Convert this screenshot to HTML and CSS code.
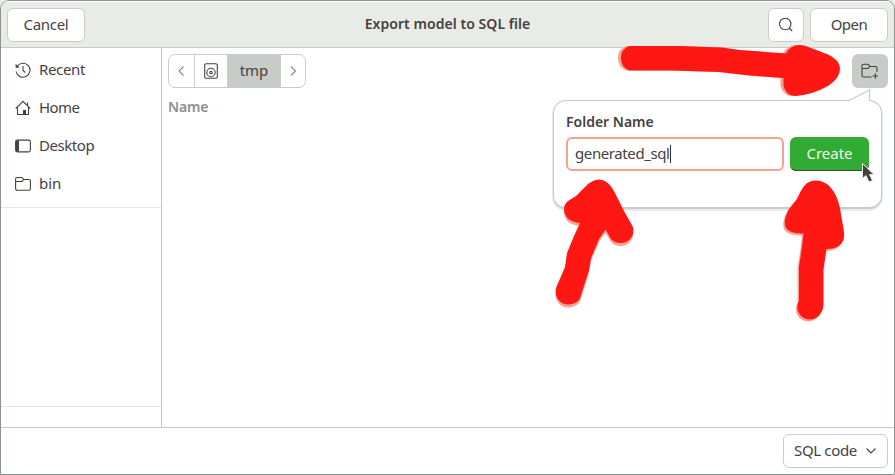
FILE: index.html
```html
<!DOCTYPE html>
<html lang="en">
<head>
<meta charset="utf-8">
<title>Export model to SQL file</title>
<link rel="stylesheet" href="styles.css">
</head>
<body>
<div class="window">
  <header class="header">
    <button class="btn cancel"><span class="t-cancel">Cancel</span></button>
    <h1 class="title">Export model to SQL file</h1>
    <div class="actions">
      <button class="btn search"><svg width="16" height="16" viewBox="0 0 16 16"><circle cx="7.2" cy="7" r="5.7"/><path d="M11.2 11l3 3"/></svg></button>
      <button class="btn open"><span class="t-open">Open</span></button>
    </div>
  </header>
  <main class="main">
    <nav class="sidebar">
      <ul class="places">
        <li><svg width="16" height="16" viewBox="0 0 16 16"><path d="M2.2 4.3A7 7 0 1 1 1.1 9.5M8 4v4.5l2.3 2"/><path class="solid" d="M.6 1.800v4h4z"/></svg><span class="t-recent">Recent</span></li>
        <li><svg width="16" height="16" viewBox="0 0 16 16"><path d="M.7 8.6L8 1.3l7.3 7.3M2.5 7.3v7.2h11V7.3M12.5 5.5V2.5"/><path class="solid" d="M8 10h3v4.5H8z"/></svg><span class="t-home">Home</span></li>
        <li><svg width="16" height="16" viewBox="0 0 16 16"><rect x=".6" y="2.1" width="14.8" height="11.8" rx="1.8"/><path class="solid" d="M1 2.500h3v11H1z"/></svg><span class="t-desktop">Desktop</span></li>
        <li><svg width="16" height="16" viewBox="0 0 16 16"><path d="M.6 5.500V3Q.6 1.500 2.100 1.500h4.300q1 0 1.600 1l.5 1h5.400q1.500 0 1.500 1.500v7.500q0 1.800-1.800 1.800H2.400Q.6 14.300 .6 12.500V6q0-.5 1-.5h4.800q1 0 1.500-1l.6-1"/></svg><span class="t-bin">bin</span></li>
      </ul>
      <div class="other"></div>
    </nav>
    <section class="content">
      <div class="toolbar">
        <div class="path">
          <span class="seg arrow"><svg width="10" height="12" viewBox="0 0 10 12"><path d="M6.500 1.500L2 6l4.500 4.500"/></svg></span>
          <span class="seg disk"><svg width="14" height="16" viewBox="0 0 14 16"><rect x=".7" y=".7" width="12.6" height="14.6" rx="1.5"/><circle cx="7" cy="9.5" r="4.2"/><circle cx="7" cy="9.5" r="1.3"/></svg></span>
          <span class="seg current"><span class="t-tmp">tmp</span></span>
          <span class="seg arrow last"><svg width="10" height="12" viewBox="0 0 10 12"><path d="M3 1.500L7.500 6 3 10.500"/></svg></span>
        </div>
        <button class="new-folder"><svg width="18" height="16" viewBox="0 0 18 16"><path d="M10.5 14H2.5Q1 14 1 12.5V2.8Q1 1.300 2.500 1.300h4q1 0 1.500 1l.5 1.200h6Q16 3.500 16 5v4M1 5.500h5.500q1 0 1.500-1l.5-1M11.500 13H17M14.300 10.200v5.600"/></svg></button>
      </div>
      <div class="column-head"><span class="t-name">Name</span></div>
    </section>
  </main>
  <footer class="footer">
    <button class="btn filter"><span class="t-sql">SQL code</span><svg width="12" height="8" viewBox="0 0 12 8"><path d="M1.500 1.500L6 6l4.500-4.500"/></svg></button>
  </footer>

  <div class="popover">
    <svg class="pointer" width="24" height="13" viewBox="0 0 24 13"><path d="M1 12L22.500 1v11"/></svg>
    <div class="label"><span class="t-folder">Folder Name</span></div>
    <div class="row">
      <div class="entry"><span class="t-entry">generated_sql</span><i class="caret"></i></div>
      <button class="create"><span class="t-create">Create</span></button>
    </div>
  </div>

  <svg class="overlay" width="895" height="475" viewBox="0 0 895 475">
    <defs>
      <path id="a1" d="M629 46H680L722 47.500 740 50 786 53.500Q790 45 800 45 804 45 811 48L828 54.500Q840 60 840 69 840 78 828 86 813 94.500 796 96 786 96 783.500 86L783.500 78 750 75.500 720 72 672 70.500H629Q621 67 621 58 621 49 629 46Z"/>
      <path id="a2" d="M599 179.500Q592 179.500 585 187L576 196 568 201Q562 206 565 214 568 222 580 223L574 236 567 253 565 267 556 288C554 297 560 304.500 568 304.500 575 304.500 580 301 581 295L589 270 591 258 599 239 605.500 229.500 611 239Q617 245 626 242 635 237 633 227L624 211 615 193Q609 180 599 179.500Z"/>
      <path id="a3" d="M816 180.500Q806 180 801 191L797 199 789 209Q783 220 785.500 227 789 234 803.500 233.500L802 247 799 267V301C794 310 801 319.500 810 319.500 817 319.500 823.500 313 823.500 304V270L826.500 249Q840 249 843.500 240 845 234 843 226L840 208Q837 195 831 188 825 180.500 816 180.500Z"/>
    </defs>
    <g class="shade"><use href="#a1" x="-3"/><use href="#a2" y="3"/><use href="#a3" x="-1.500" y="2"/></g>
    <g class="ink"><use href="#a1"/><use href="#a2"/><use href="#a3"/></g>
    <path class="cursor" d="M862.500 163.500v15l3.500-3 3 6.500 3.500-1.500-3-6h4.500z"/>
  </svg>
</div>
</body>
</html>
```

FILE: styles.css
```css
* { box-sizing: border-box; }
body { margin: 0; background: #e9ebe6; font: 15px/20px "Noto Sans", "Open Sans", sans-serif; color: #45413f; }
button { font: inherit; color: inherit; margin: 0; padding: 0; }
span { white-space: nowrap; }
svg { display: block; flex: none; fill: none; stroke: #45413f; stroke-width: 1.1; }
svg .solid { fill: #45413f; stroke: none; }
.window { position: relative; width: 895px; height: 475px; display: flex; flex-direction: column; overflow: hidden; background: #fff; border: 1px solid #8b9091; border-radius: 9px 9px 0 0; }
.header { height: 47px; flex: none; display: grid; grid-template-columns: 127px 1fr 127px; align-items: center; padding: 0 6px; background: #e9ebe6; border-top: 1px solid #fff; border-bottom: 1px solid #c8ccc9; }
.btn { height: 34px; display: flex; align-items: center; justify-content: center; background: #fff; border: 1px solid #c8ccc9; border-radius: 6px; }
.cancel { width: 78px; }
.title { margin: 0; padding-bottom: 2px; font-size: 14px; line-height: 20px; font-weight: 600; letter-spacing: .05px; text-align: center; white-space: nowrap; }
.actions { display: flex; gap: 6px; justify-content: flex-end; }
.search { width: 36px; }
.open { width: 78px; }
.main { flex: 1; display: flex; min-height: 0; }
.sidebar { width: 161px; border-right: 1px solid #c8c8c8; display: flex; flex-direction: column; }
.places { list-style: none; margin: 0; padding: 3px 0 4px; border-bottom: 1px solid #e6e6e3; }
.places li { height: 38px; display: flex; align-items: center; gap: 8px; padding-left: 14px; }
.other { flex: 1; margin-bottom: 20px; border-bottom: 1px solid #e6e6e0; }
.content { flex: 1; padding: 6px 6px 0; }
.toolbar { display: flex; justify-content: space-between; }
.path { height: 34px; width: 138px; display: flex; border: 1px solid #c8ccc9; border-radius: 7px; overflow: hidden; }
.seg { display: flex; align-items: center; justify-content: center; }
.arrow { width: 26px; border-right: 1px solid #c8ccc9; }
.arrow.last { flex: 1; border: 0; }
.arrow svg { stroke: #858987; }
.disk { width: 32px; }
.current { width: 54px; background: #c8ccc9; }
.new-folder { width: 36px; height: 34px; display: flex; align-items: center; justify-content: center; border: 0; border-radius: 6px; background: #c8ccc9; }
.column-head { margin-top: 9px; color: #8b8f8d; font-weight: 600; font-size: 14px; }
.footer { height: 47px; flex: none; display: flex; justify-content: flex-end; padding: 6px; border-top: 1px solid #c8c8c8; }
.filter { width: 105px; gap: 8px; }
.popover { position: absolute; left: 552px; top: 99px; width: 329px; height: 109px; padding: 11px 12px; background: #fff; border: 1px solid #c8ccc9; border-bottom-width: 2px; border-radius: 13px; box-shadow: 0 1px 0 1px #e9ebe6; }
.pointer { position: absolute; left: 293px; top: -12px; fill: #fff; stroke: #c8ccc9; }
.label { height: 20px; font-size: 14px; font-weight: 600; }
.row { display: flex; gap: 6px; margin-top: 5px; }
.entry { width: 218px; height: 34px; flex: none; display: flex; align-items: center; padding-left: 7px; border: 2px solid #f3a293; border-radius: 6px; }
.caret { width: 1px; height: 18px; background: #333; }
.create { width: 79px; height: 34px; flex: none; border: 0; border-bottom: 1px solid #45413f; border-radius: 6px; background: #31ab33; color: #f4f7f1; }

/* label metrics */
.btn span, .places span, .current span, .entry span { padding-bottom: 2px; }
.t-create { position: relative; top: -1px; }
.t-cancel { letter-spacing: -.3px; }
.t-recent { letter-spacing: -.35px; }
.t-home { letter-spacing: -.6px; }
.t-desktop { letter-spacing: -.45px; }
.t-open { letter-spacing: -.5px; }
.t-sql { letter-spacing: -.35px; }
.t-entry { letter-spacing: -.4px; }
.t-name { letter-spacing: -.15px; }

.overlay { position: absolute; left: -1px; top: -1px; pointer-events: none; stroke: none; }
.shade { fill: #f5a092; }
.ink { fill: #ff1713; }
.cursor { fill: #45413f; stroke: #e9ebe6; stroke-width: 1; }
```
